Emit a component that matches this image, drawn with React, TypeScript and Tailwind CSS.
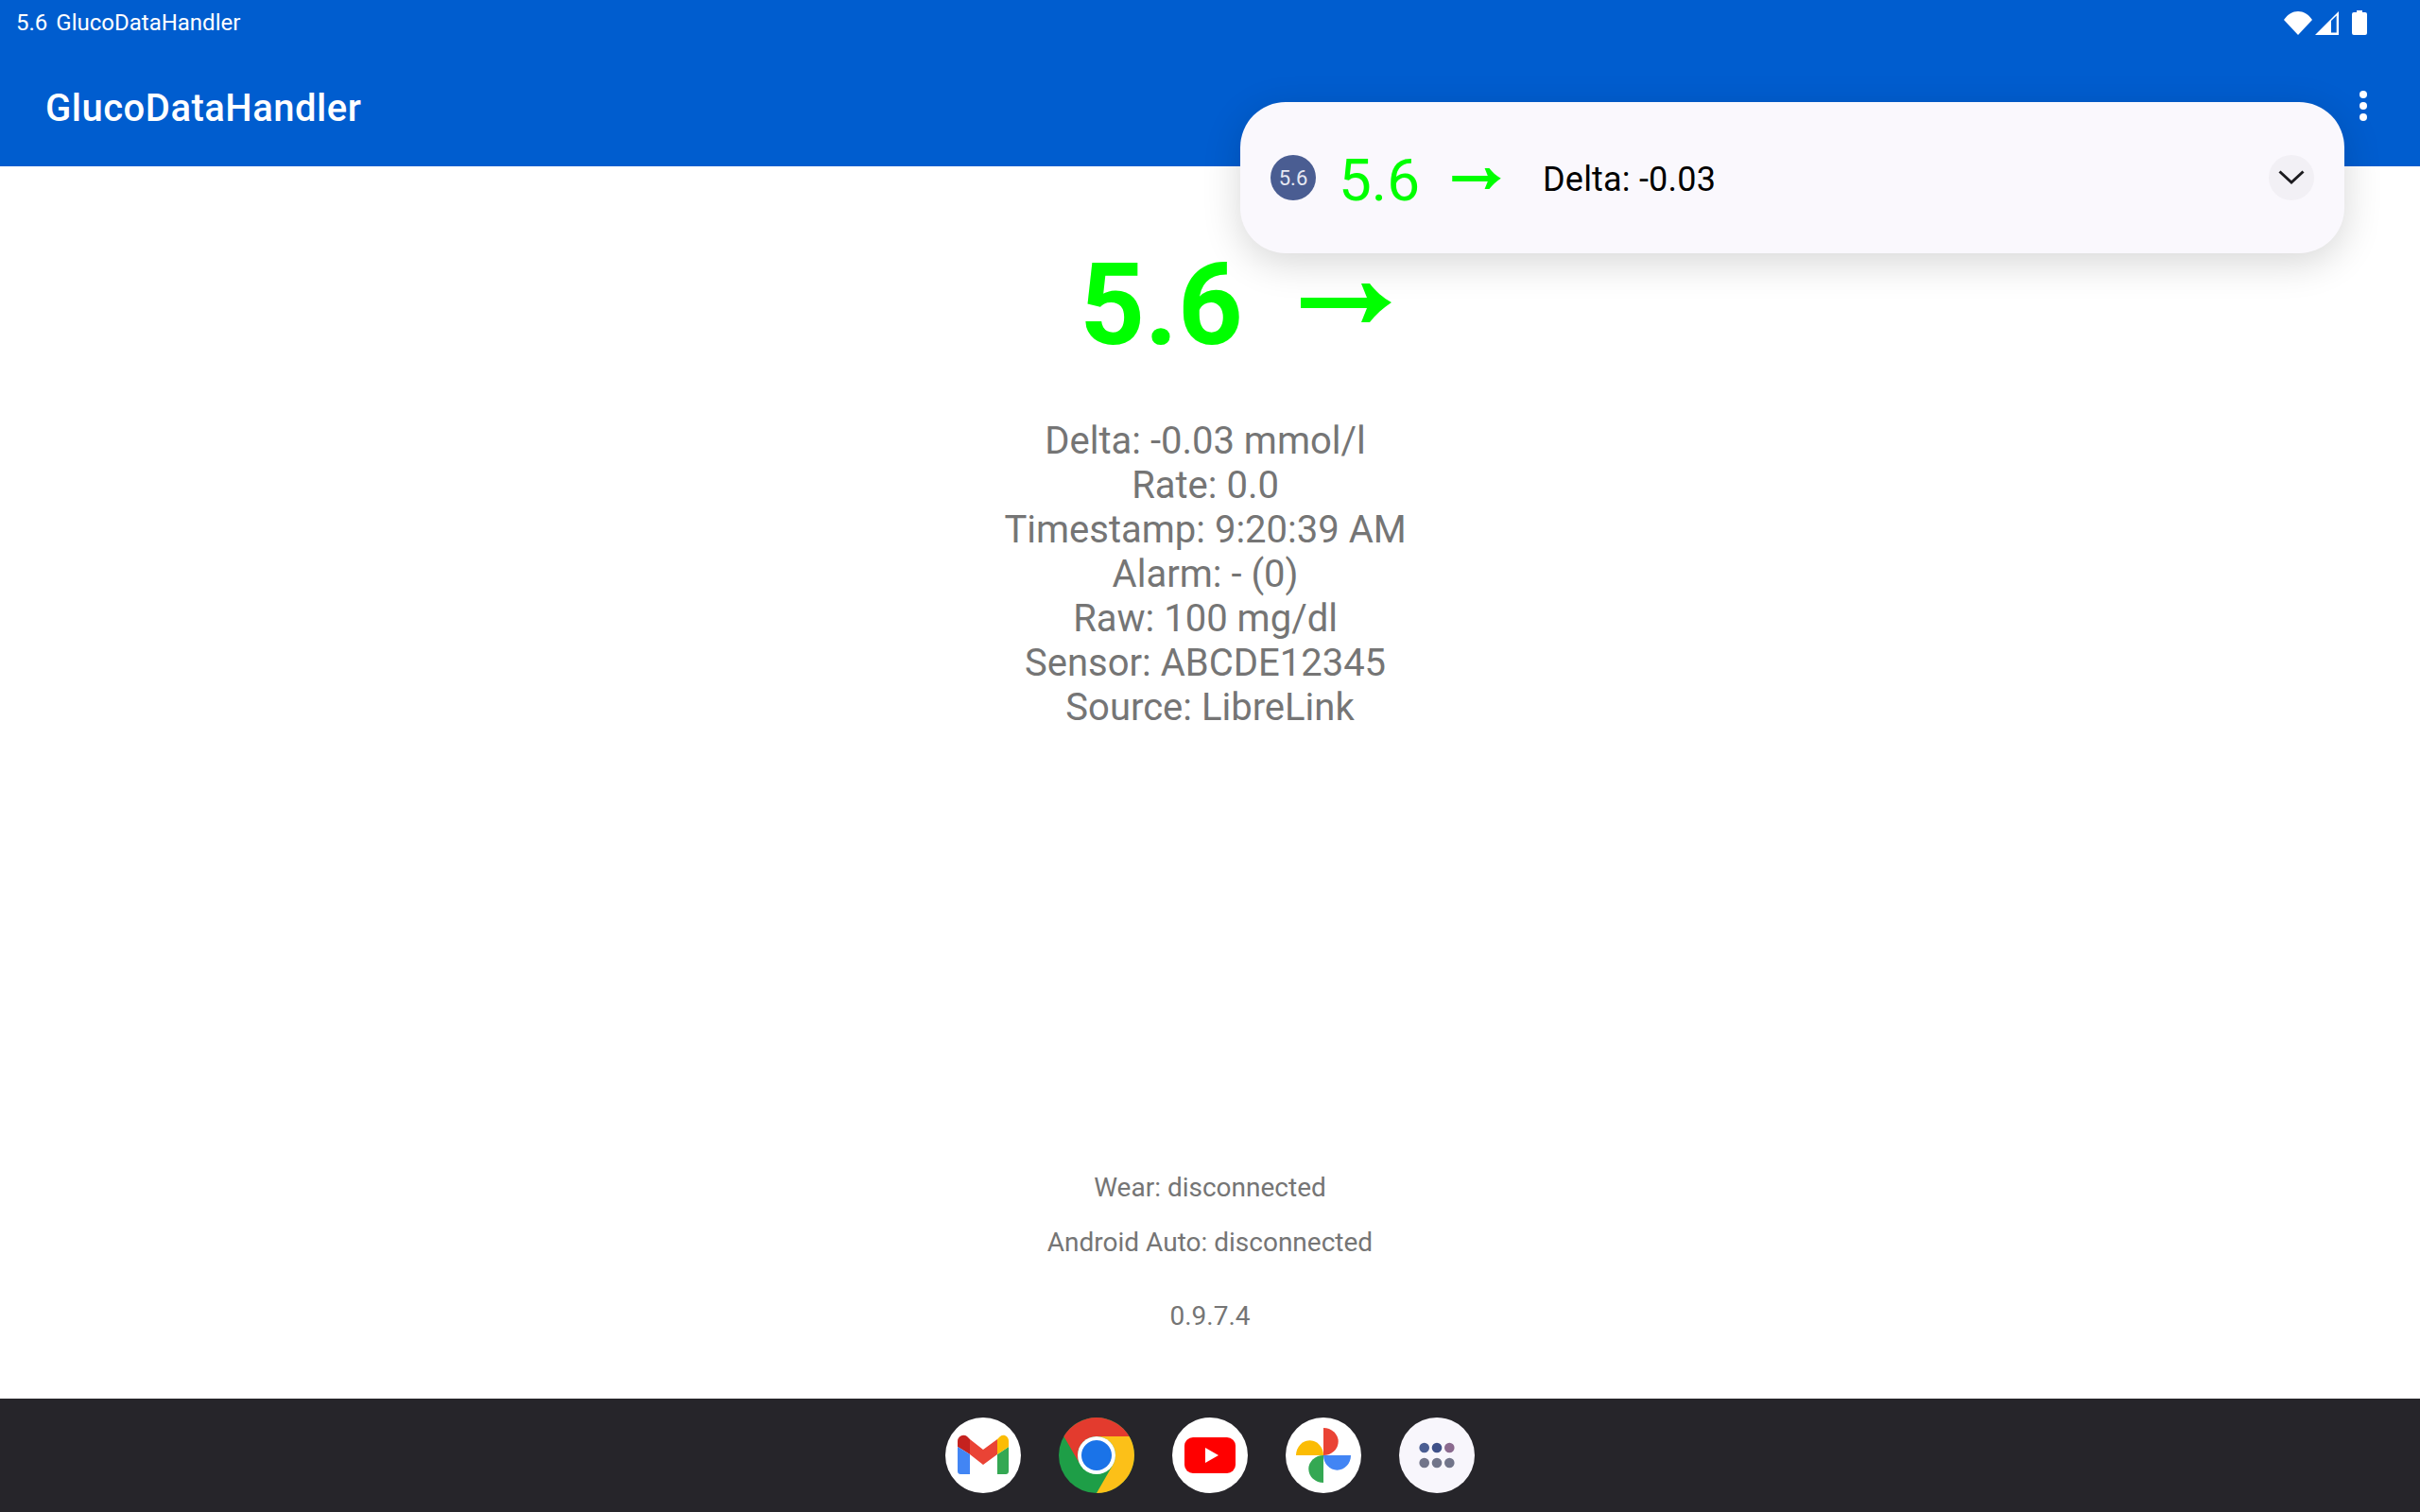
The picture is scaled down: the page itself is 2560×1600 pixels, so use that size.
const DETAILS = [
  "Delta: -0.03 mmol/l ",
  "Rate: 0.0 ",
  "Timestamp: 9:20:39 AM ",
  "Alarm: - (0) ",
  "Raw: 100 mg/dl ",
  "Sensor: ABCDE12345 ",
  "Source: LibreLink",
];

function TrendArrow({ className }: { className: string }) {
  return (
    <svg viewBox="0 0 96 41" className={className} fill="#00ff00">
      <path d="M0 15h70L64 0h9c6 8 14 15 23 20c-9 6-17 13-23 21h-9l6-15H0z" />
    </svg>
  );
}

function StatusIcons() {
  return (
    <div className="flex items-center">
      <svg viewBox="0 0 30 25" className="h-[25px] w-[30px]" fill="white">
        <path d="M0 9C8 -3 22 -3 30 9L15 25z" />
      </svg>
      <svg viewBox="0 0 25 25" className="ml-[3px] h-[25px] w-[25px]" fill="white">
        <path fillRule="evenodd" d="M25 0v25H0zM22.700 4.500L17 10v12.500h5.700z" />
      </svg>
      <svg viewBox="0 0 16 26" className="ml-[14px] h-[26px] w-[16px]" fill="white">
        <path d="M5 0h6v2h3a2 2 0 0 1 2 2v20a2 2 0 0 1-2 2H2a2 2 0 0 1-2-2V4a2 2 0 0 1 2-2h3z" />
      </svg>
    </div>
  );
}

function Gmail() {
  return (
    <svg viewBox="0 0 80 80" className="h-20 w-20">
      <circle cx="40" cy="40" r="40" fill="white" />
      <path d="M26 23l14 11 15-11v16L40 50 26 39z" fill="#ea4335" />
      <path d="M13 31v-6c0-5 6-8 10-5l3 3v16z" fill="#c5221f" />
      <path d="M13 31l13 8v21h-10c-1.7 0-3-1.3-3-3z" fill="#4285f4" />
      <path d="M67 31l-12 8v21h9c1.7 0 3-1.3 3-3z" fill="#34a853" />
      <path d="M55 39V23l3-3c4-3 9 0 9 5v6z" fill="#fbbc04" />
    </svg>
  );
}

function Chrome() {
  return (
    <svg viewBox="0 0 80 80" className="h-20 w-20">
      <circle cx="40" cy="40" r="40" fill="#1e9e47" />
      <path d="M74.6 20A40 40 0 0 0 5.4 20L22.7 50A20 20 0 0 1 40 20z" fill="#e33b2e" />
      <path d="M74.6 20A40 40 0 0 1 40 80L57.3 50A20 20 0 0 0 40 20z" fill="#fcc018" />
      <circle cx="40" cy="40" r="20" fill="white" />
      <circle cx="40" cy="40" r="16" fill="#1a73e8" />
    </svg>
  );
}

function YouTube() {
  return (
    <svg viewBox="0 0 80 80" className="h-20 w-20">
      <circle cx="40" cy="40" r="40" fill="white" />
      <rect x="13" y="21" width="54" height="38" rx="9" fill="#ff0000" />
      <path d="M35 32l14 8-14 8z" fill="white" />
    </svg>
  );
}

function Photos() {
  return (
    <svg viewBox="0 0 80 80" className="h-20 w-20">
      <circle cx="40" cy="40" r="40" fill="white" />
      <path d="M40 11a15.700 14.500 0 0 1 0 29z" fill="#ea4335" />
      <path d="M69 40a14.500 15.700 0 0 1-29 0z" fill="#4285f4" />
      <path d="M40 69a15.700 14.500 0 0 1 0-29z" fill="#34a853" />
      <path d="M11 40a14.500 15.700 0 0 1 29 0z" fill="#fbbc04" />
    </svg>
  );
}

function Apps() {
  return (
    <svg viewBox="0 0 80 80" className="h-20 w-20">
      <circle cx="40" cy="40" r="40" fill="#f8f6fc" />
      <circle cx="26.700" cy="32" r="5.300" fill="#4a5d92" />
      <circle cx="40" cy="32" r="5.300" fill="#3f5189" />
      <circle cx="53.300" cy="32" r="5.300" fill="#8b6a8f" />
      <circle cx="26.700" cy="48" r="5.300" fill="#72758a" />
      <circle cx="40" cy="48" r="5.300" fill="#72758a" />
      <circle cx="53.300" cy="48" r="5.300" fill="#72758a" />
    </svg>
  );
}

function Notification() {
  return (
    <div className="absolute top-[108px] left-[1312px] flex h-[160px] w-[1168px] items-center rounded-[48px] bg-[#faf8fd] pr-8 pl-8 shadow-[0_10px_40px_rgba(0,0,0,0.16)]">
      <div className="flex h-12 w-[48px] items-center justify-center rounded-full bg-[#4a5d92] text-[22px] text-[#e6e8f2]">
        5.6
      </div>
      <span className="mt-[5px] ml-[24px] text-[62px] leading-none text-[#00ff00]">5.6</span>
      <TrendArrow className="mt-[2px] ml-[34px] h-[22px] w-[52px]" />
      <span className="mt-[3px] ml-[44px] text-[36px] leading-none tracking-[0.2px] text-black">Delta: -0.03</span>
      <div className="ml-auto flex h-12 w-12 items-center justify-center rounded-full bg-[#f2f0f5]">
        <svg viewBox="0 0 28 16" className="h-[16px] w-[28px]" fill="none" stroke="#1c1b1f" strokeWidth="3">
          <path d="M1.500 1.500L14 13l12.500-11.500" />
        </svg>
      </div>
    </div>
  );
}

export default function App() {
  return (
    <div className="relative flex h-[1600px] w-[2560px] flex-col overflow-hidden bg-white font-['Roboto',sans-serif]">
      <header className="h-[176px] bg-[#005dcf] text-white">
        <div className="flex h-12 items-center pr-[56px] pl-[17px]">
          <span className="text-[24px]">5.6</span>
          <span className="ml-[9px] text-[24px]">GlucoDataHandler</span>
          <div className="ml-auto">
            <StatusIcons />
          </div>
        </div>
        <div className="flex h-[128px] items-center pr-[56px] pl-12">
          <span className="mt-[5px] text-[40px] font-medium tracking-[0.5px]">GlucoDataHandler</span>
          <div className="ml-auto flex flex-col gap-1">
            <span className="h-2 w-2 rounded-full bg-white" />
            <span className="h-2 w-2 rounded-full bg-white" />
            <span className="h-2 w-2 rounded-full bg-white" />
          </div>
        </div>
      </header>

      <main className="flex flex-1 flex-col items-center text-[#757575]">
        <div className="mt-[84px] flex items-center pl-[54px]">
          <span className="text-[120px] leading-[126px] font-bold text-[#00ff00]">5.6</span>
          <TrendArrow className="mt-[-6px] ml-[61px] h-[41px] w-[96px]" />
        </div>
        <div className="mt-[57px] flex flex-col items-center text-[40px] leading-[47px] whitespace-pre">
          {DETAILS.map((line) => (
            <span key={line}>{line}</span>
          ))}
        </div>
        <div className="mt-auto mb-[71px] flex flex-col items-center text-[28px] leading-[33px]">
          <span>Wear: disconnected</span>
          <span className="mt-[25px]">Android Auto: disconnected</span>
          <span className="mt-[45px]">0.9.7.4</span>
        </div>
      </main>

      <footer className="flex h-[120px] items-center justify-center gap-10 bg-[#26252a]">
        <Gmail />
        <Chrome />
        <YouTube />
        <Photos />
        <Apps />
      </footer>

      <Notification />
    </div>
  );
}
